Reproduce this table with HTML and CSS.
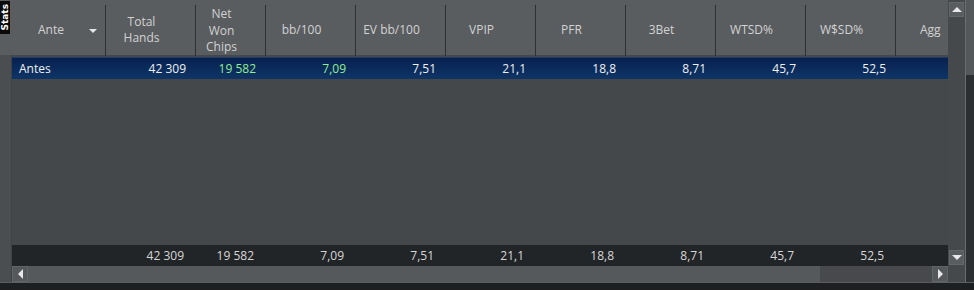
FILE: index.html
```html
<!DOCTYPE html>
<html>
<head>
<meta charset="utf-8">
<link rel="stylesheet" href="styles.css">
</head>
<body>
<div class="app">
  <div class="main">
    <div class="grid">
      <div class="head">
        <div class="tabcol"><div class="stats-tab"><span>Stats</span></div></div>
        <div class="hc ante"><span>Ante</span><i class="dd"></i></div>
        <div class="hc">Total<br>Hands</div>
        <div class="hc tall">Net<br>Won<br>Chips</div>
        <div class="hc">bb/100</div>
        <div class="hc">EV bb/100</div>
        <div class="hc">VPIP</div>
        <div class="hc">PFR</div>
        <div class="hc">3Bet</div>
        <div class="hc">WTSD%</div>
        <div class="hc">W$SD%</div>
        <div class="hc last">Agg</div>
      </div>
      <div class="bodywrap">
        <div class="gutter"></div>
        <div class="content">
          <div class="row sel">
            <div class="c first">Antes</div>
            <div class="c">42 309</div>
            <div class="c green">19 582</div>
            <div class="c green">7,09</div>
            <div class="c">7,51</div>
            <div class="c">21,1</div>
            <div class="c">18,8</div>
            <div class="c">8,71</div>
            <div class="c">45,7</div>
            <div class="c">52,5</div>
            <div class="c"></div>
          </div>
          <div class="filler"></div>
          <div class="row total">
            <div class="c first"></div>
            <div class="c">42 309</div>
            <div class="c">19 582</div>
            <div class="c">7,09</div>
            <div class="c">7,51</div>
            <div class="c">21,1</div>
            <div class="c">18,8</div>
            <div class="c">8,71</div>
            <div class="c">45,7</div>
            <div class="c">52,5</div>
            <div class="c"></div>
          </div>
          <div class="hscroll">
            <div class="sbtn"><i class="tri-left"></i></div>
            <div class="track"><div class="thumb"></div></div>
            <div class="sbtn"><i class="tri-right"></i></div>
          </div>
        </div>
      </div>
    </div>
    <div class="vscroll">
      <div class="vbtn"><i class="tri-up"></i></div>
      <div class="vtrack"></div>
      <div class="vbtn"><i class="tri-down"></i></div>
    </div>
    <div class="edge">
      <div class="edge-top"></div>
      <div class="edge-bot"></div>
    </div>
  </div>
  <div class="bottom"></div>
</div>
</body>
</html>
```

FILE: styles.css
```css
* { box-sizing: border-box; }
html, body { margin: 0; padding: 0; }
body {
  width: 974px;
  height: 290px;
  overflow: hidden;
  background: #1d1f21;
  font-family: "Open Sans", "Noto Sans", sans-serif;
  font-size: 12px;
}
.app { display: flex; flex-direction: column; width: 974px; height: 290px; }
.main { display: flex; height: 283px; border-bottom: 1px solid #5c5f62; }
.grid { width: 948px; display: flex; flex-direction: column; background: #45484b; }

.head {
  height: 55px;
  display: grid;
  grid-template-columns: 11px 94px 90px 70px repeat(7, 90px) 53px;
  background: #5a5d60;
  color: #d2d2d2;
}
.tabcol { padding-top: 1px; }
.stats-tab {
  width: 10px;
  height: 33px;
  background: #0a0a0a;
  display: flex;
  align-items: center;
  justify-content: center;
  overflow: hidden;
}
.stats-tab span {
  writing-mode: vertical-rl;
  transform: rotate(180deg);
  color: #ffffff;
  font-family: "DejaVu Sans", sans-serif;
  font-weight: bold;
  font-size: 9px;
  line-height: 10px;
}
.hc {
  margin: 5px 0 2px;
  border-left: 1px solid #2e3033;
  display: flex;
  align-items: center;
  justify-content: center;
  text-align: center;
  padding-right: 18px;
  line-height: 16.5px;
  white-space: nowrap;
  overflow: hidden;
}
.hc.tall { overflow: visible; line-height: 16.5px; padding-top: 1px; }
.hc.ante {
  border-left: none;
  justify-content: space-between;
  padding: 0 8px 0 27px;
}
.dd {
  width: 0; height: 0;
  border-left: 4px solid transparent;
  border-right: 4px solid transparent;
  border-top: 4px solid #e6e6e6;
  margin-top: 1px;
}
.hc.last { justify-content: flex-start; padding: 0 0 0 24px; }

.bodywrap { flex: 1; display: flex; }
.gutter { width: 12px; background: #4b4e51; border-right: 1px solid #3f4245; }
.content { flex: 1; display: flex; flex-direction: column; padding-top: 2px; }
.row {
  display: grid;
  grid-template-columns: 93px 90px 70px repeat(7, 90px) 53px;
  align-items: center;
}
.row .c { text-align: right; padding-right: 9px; white-space: nowrap; }
.row .c.first { text-align: left; padding-left: 7px; }
.row.sel {
  height: 22px;
  background: linear-gradient(#072150, #0e3567);
  color: #f0f0f0;
  border-top: 1px solid #1d3e6c;
}
.row .green { color: #90ee90; }
.filler { flex: 1; }
.row.total {
  height: 21px;
  background: #222528;
  color: #d6d6d6;
}
.row.total .c { padding-right: 11px; }

.hscroll { height: 16px; display: flex; background: #47494c; }
.sbtn {
  width: 16px;
  height: 16px;
  background: #55585b;
  border: 1px solid #626568;
  display: flex;
  align-items: center;
  justify-content: center;
}
.track { flex: 1; display: flex; }
.thumb { width: 792px; background: #56595c; }
.tri-left { width: 0; height: 0; border-top: 5px solid transparent; border-bottom: 5px solid transparent; border-right: 5px solid #e8e8e8; }
.tri-right { width: 0; height: 0; border-top: 5px solid transparent; border-bottom: 5px solid transparent; border-left: 5px solid #e8e8e8; }

.vscroll { width: 17px; display: flex; flex-direction: column; background: #46494c; padding: 2px 1px 17px 1px; }
.vbtn {
  height: 15px;
  background: #5a5d60;
  border: 1px solid #64676a;
  display: flex;
  align-items: center;
  justify-content: center;
}
.vtrack { flex: 1; }
.tri-up { width: 0; height: 0; border-left: 5px solid transparent; border-right: 5px solid transparent; border-bottom: 5px solid #e8e8e8; }
.tri-down { width: 0; height: 0; border-left: 5px solid transparent; border-right: 5px solid transparent; border-top: 5px solid #e8e8e8; }

.edge { flex: 1; display: flex; flex-direction: column; border-left: 1px solid #6a6d70; }
.edge-top { height: 75px; background: #55585b; }
.edge-bot { flex: 1; background: #2c2f32; }
.bottom { flex: 1; background: #1d1f21; }
```
